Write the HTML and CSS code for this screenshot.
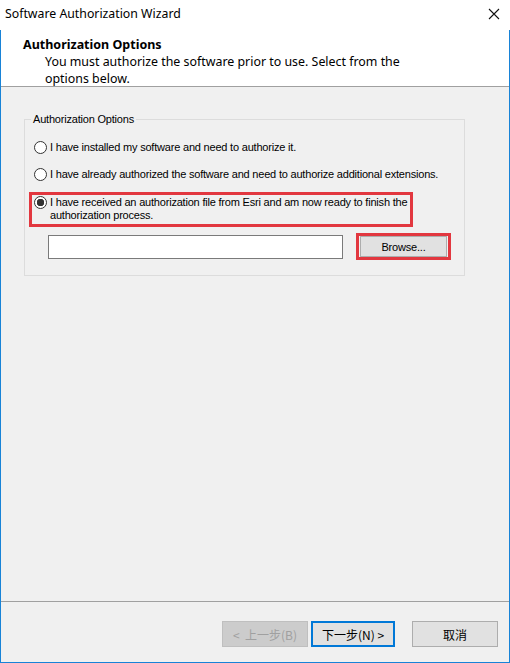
FILE: index.html
```html
<!DOCTYPE html>
<html lang="en">

<head>
    <meta charset="UTF-8">
    <meta name="viewport" content="width=device-width, initial-scale=1.0">
    <title>Software Authorization Wizard</title>
    <link rel="stylesheet" href="styles.css">
</head>

<body>
    <div class="window">
        <!-- Title bar -->
        <div class="title-bar">
            <span class="title">Software Authorization Wizard</span>
            <svg class="close-icon" width="12" height="12" viewBox="0 0 12 12">
                <path d="M1 1 L11 11 M11 1 L1 11" stroke="#111" stroke-width="1.1" fill="none" />
            </svg>
        </div>

        <div class="frame">
            <!-- Wizard header -->
            <div class="header">
                <div class="header-title">Authorization Options</div>
                <div class="header-text">You must authorize the software prior to use. Select from the options below.</div>
            </div>

            <!-- Page content -->
            <div class="content">
                <fieldset class="group">
                    <legend>Authorization Options</legend>
                    <div class="options">
                        <label class="option">
                            <input type="radio" name="auth">
                            <span>I have installed my software and need to authorize it.</span>
                        </label>
                        <label class="option option-second">
                            <input type="radio" name="auth">
                            <span>I have already authorized the software and need to authorize additional extensions.</span>
                        </label>
                        <label class="option option-marked">
                            <input type="radio" name="auth" checked>
                            <span>I have received an authorization file from Esri and am now ready to finish the authorization process.</span>
                        </label>
                        <div class="file-row">
                            <input type="text" class="file-input">
                            <div class="marked-box">
                                <button class="browse-button">Browse...</button>
                            </div>
                        </div>
                    </div>
                </fieldset>
            </div>

            <!-- Wizard buttons -->
            <div class="footer">
                <button class="wiz-button back-button" disabled>&lt;&nbsp; 上一步(B)</button>
                <button class="wiz-button next-button">下一步(N) &gt;</button>
                <button class="wiz-button cancel-button">取消</button>
            </div>
        </div>
    </div>
</body>

</html>
```

FILE: styles.css
```css
body {
    margin: 0;
    font-family: 'Noto Sans', sans-serif;
    color: #000;
}

.window {
    width: 510px;
    height: 663px;
    display: flex;
    flex-direction: column;
    background-color: #fff;
}

.title-bar {
    height: 30px;
    display: flex;
    align-items: center;
    justify-content: space-between;
    padding: 0 10px 0 5px;
    flex-shrink: 0;
}

.title {
    font-size: 12.3px;
    margin-top: -4px;
}

.close-icon {
    margin-top: -3px;
}

.frame {
    flex: 1;
    display: flex;
    flex-direction: column;
    border: 1px solid #1883d7;
    border-top: none;
    background-color: #f0f0f0;
}

.header {
    height: 57px;
    background-color: #fff;
    border-bottom: 1px solid #a0a0a0;
    padding: 7px 0 0 22px;
    box-sizing: border-box;
}

.header-title {
    font-size: 12.5px;
    font-weight: bold;
    line-height: 16px;
}

.header-text {
    font-size: 12.4px;
    line-height: 17px;
    padding-left: 22px;
    width: 380px;
}

.content {
    flex: 1;
    padding: 26px 0 0 23px;
}

.group {
    width: 441px;
    box-sizing: border-box;
    margin: 0;
    padding: 0;
    border: 1px solid #dcdcdc;
    font-family: 'Liberation Sans', Arial, sans-serif;
    font-size: 11px;
    letter-spacing: -0.2px;
}

.group legend {
    margin-left: 6px;
    padding: 0 2px;
    line-height: 13px;
}

.options {
    padding: 15px 0 15px 4px;
}

.option {
    display: flex;
    align-items: flex-start;
    padding-left: 5px;
    line-height: 13px;
}

.option-second {
    margin-top: 14px;
}

.option input {
    appearance: none;
    width: 13px;
    height: 13px;
    margin: 0 3px 0 0;
    border: 1px solid #333;
    border-radius: 50%;
    background-color: #fff;
    flex-shrink: 0;
    box-sizing: border-box;
}

.option input:checked {
    background: radial-gradient(circle, #333 0 3.5px, #fff 4px);
}

.option-marked {
    width: 384px;
    box-sizing: border-box;
    margin-top: 11px;
    border: 3px solid #e2373f;
    padding: 1px 0 2px 2px;
}

.file-row {
    display: flex;
    align-items: center;
    margin-top: 6px;
    padding-left: 19px;
}

.file-input {
    width: 295px;
    height: 24px;
    box-sizing: border-box;
    margin: 0 13px 0 0;
    border: 1px solid #7a7a7a;
    background-color: #fff;
}

.marked-box {
    border: 3px solid #e2373f;
    padding: 0 1px;
}

.browse-button {
    display: block;
    width: 87px;
    height: 21px;
    border: 1px solid #adadad;
    background-color: #e1e1e1;
    font-family: 'Liberation Sans', Arial, sans-serif;
    font-size: 11px;
    letter-spacing: -0.2px;
    padding: 0;
    color: #000;
}

.footer {
    height: 61px;
    box-sizing: border-box;
    border-top: 1px solid #a0a0a0;
    display: flex;
    align-items: flex-start;
    padding: 19px 0 0 221px;
}

.wiz-button {
    width: 86px;
    height: 26px;
    box-sizing: border-box;
    border: 1px solid #adadad;
    background-color: #e1e1e1;
    font-family: 'Noto Sans CJK SC', sans-serif;
    font-size: 12px;
    padding: 0;
    color: #000;
}

.back-button {
    background-color: #cccccc;
    border-color: #bfbfbf;
    color: #a0a0a0;
}

.next-button {
    width: 84px;
    margin-left: 3px;
    border: 2px solid #0078d7;
}

.cancel-button {
    margin-left: 17px;
}
```
